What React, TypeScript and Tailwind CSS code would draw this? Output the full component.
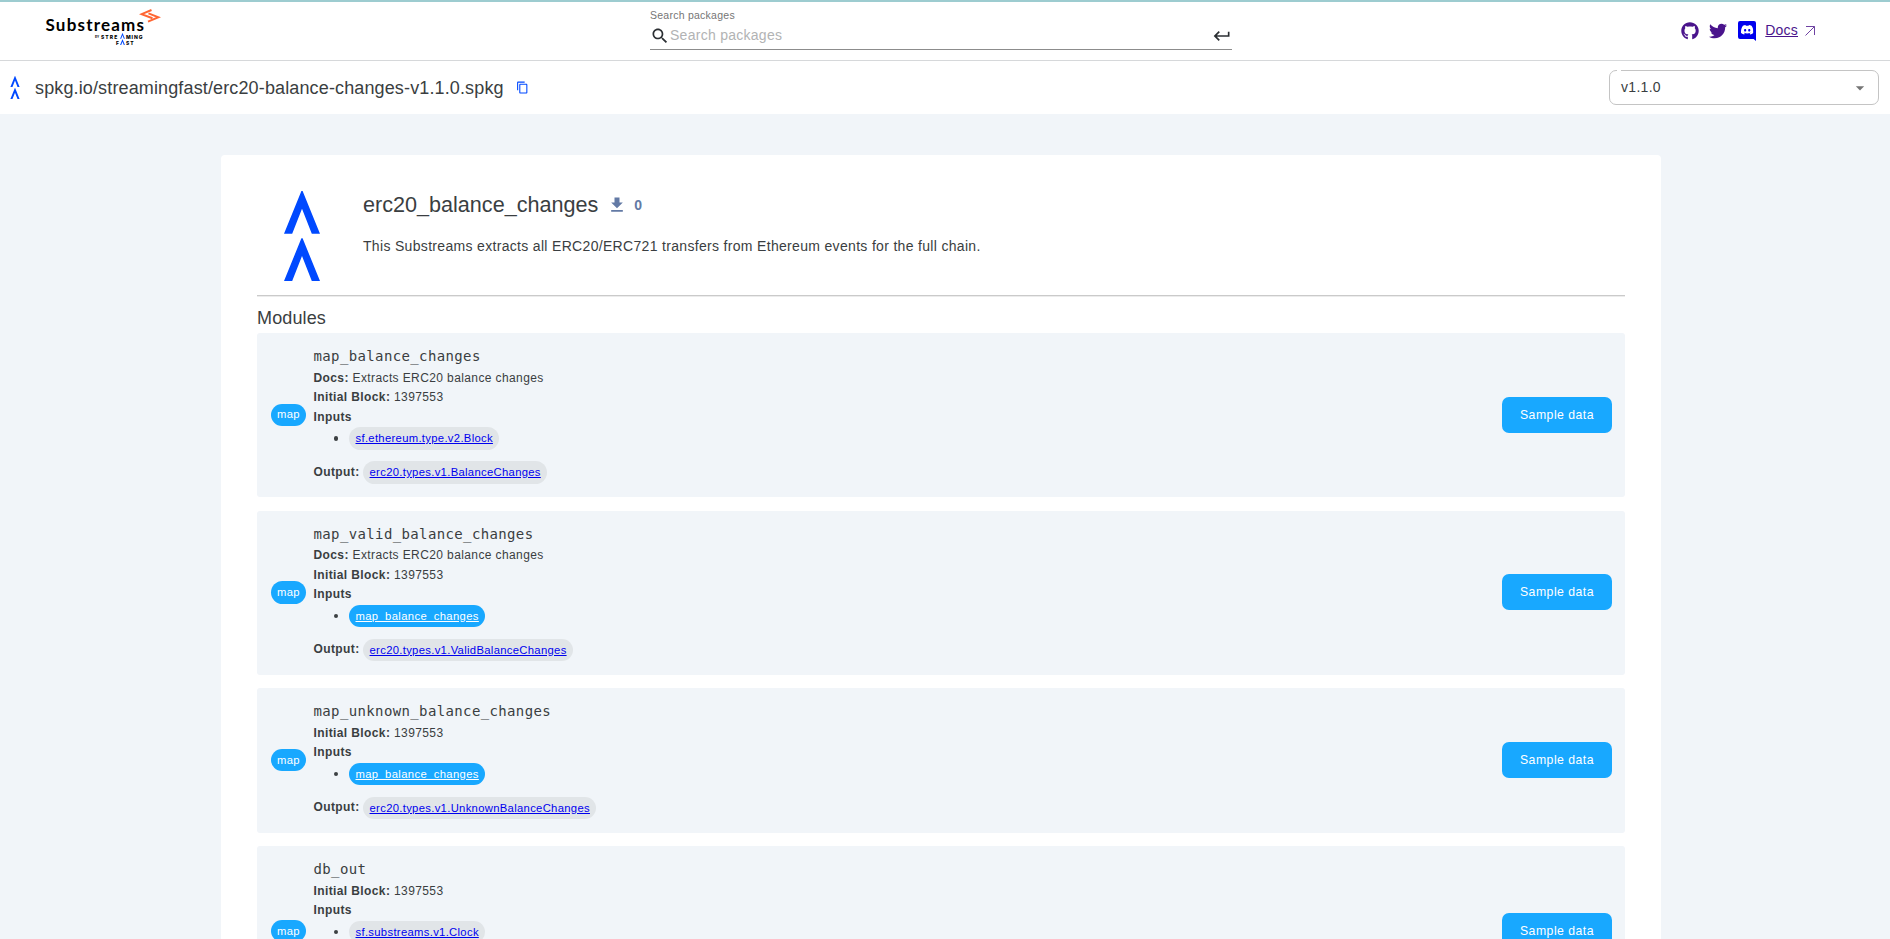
import React from "react";
import { SiDiscord } from "react-icons/si";
import { FaGithub, FaTwitter } from "react-icons/fa";

type Ref = { name: string; kind: "type" | "module" };
type Module = { name: string; docs?: string; block: number; inputs: Ref[]; output: string };

const modules: Module[] = [
  { name: "map_balance_changes", docs: "Extracts ERC20 balance changes", block: 1397553, inputs: [{ name: "sf.ethereum.type.v2.Block", kind: "type" }], output: "erc20.types.v1.BalanceChanges" },
  { name: "map_valid_balance_changes", docs: "Extracts ERC20 balance changes", block: 1397553, inputs: [{ name: "map_balance_changes", kind: "module" }], output: "erc20.types.v1.ValidBalanceChanges" },
  { name: "map_unknown_balance_changes", block: 1397553, inputs: [{ name: "map_balance_changes", kind: "module" }], output: "erc20.types.v1.UnknownBalanceChanges" },
  { name: "db_out", block: 1397553, inputs: [{ name: "sf.substreams.v1.Clock", kind: "type" }, { name: "map_valid_balance_changes", kind: "module" }], output: "sf.substreams.sink.database.v1.DatabaseChanges" },
];

function Chevrons({ className }: { className: string }) {
  return (
    <svg viewBox="0 0 36 90" className={className} fill="#0049ff">
      <path d="M17.4 0h1.2L36 42.7h-8.2L18 17.8 8.2 42.7H0z" />
      <path d="M17.4 47.3h1.2L36 90h-8.2L18 65.1 8.2 90H0z" />
    </svg>
  );
}

function BrandLogo() {
  return (
    <div className="relative ml-[45px] mt-[7px] h-[40px] w-[118px] shrink-0 text-black">
      <span className="absolute left-[0.5px] top-[4.5px] font-['Lato'] text-[17px] font-bold leading-[22px] tracking-[1.2px]">Substreams</span>
      <svg viewBox="0 0 22 14" className="absolute left-[94px] top-0 h-[14px] w-[22px]" fill="none" stroke="#ff6633" strokeWidth="2">
        <path d="M12.5 1 2.500 5.200 13.500 9.300" />
        <path d="M9.500 4.400 19.500 8.300 9 12.600" />
      </svg>
      <span className="absolute left-[50px] top-[26px] font-['Inter'] text-[3px] font-bold leading-[5px]">BY</span>
      <span className="absolute left-[56px] top-[24px] font-['Inter'] text-[5px] font-extrabold leading-[8px] tracking-[1.05px]">STRE</span>
      <span className="absolute left-[81px] top-[24px] font-['Inter'] text-[5px] font-extrabold leading-[8px] tracking-[0.9px]">MING</span>
      <span className="absolute left-[71px] top-[30px] font-['Inter'] text-[5px] font-extrabold leading-[8px]">F</span>
      <span className="absolute left-[81px] top-[30px] font-['Inter'] text-[5px] font-extrabold leading-[8px] tracking-[1px]">ST</span>
      <Chevrons className="absolute left-[75px] top-[24px] h-[12px] w-[5px]" />
    </div>
  );
}

function Header() {
  return (
    <header className="flex h-[61px] border-b border-t-2 border-b-[#d6d8da] border-t-[#9dccd0] bg-white">
      <BrandLogo />
      <div className="ml-[487px] mt-[7px] flex h-[41px] w-[582px] flex-col border-b border-[#8c8c8c]">
        <label className="text-[10.5px] leading-[12px] tracking-[0.25px] text-[#757575]">Search packages</label>
        <div className="mt-[3px] flex h-[24px] items-center">
          <svg viewBox="0 0 24 24" className="h-[20px] w-[20px]" fill="#2b2f33">
            <path d="M15.5 14h-.79l-.28-.27C15.41 12.59 16 11.11 16 9.5 16 5.91 13.09 3 9.5 3S3 5.91 3 9.5 5.91 16 9.5 16c1.61 0 3.09-.59 4.23-1.57l.27.28v.79l5 4.99L20.49 19l-4.99-5zm-6 0C7.01 14 5 11.99 5 9.5S7.01 5 9.5 5 14 7.01 14 9.5 11.99 14 9.5 14z" />
          </svg>
          <span className="mb-[2px] text-[14px] tracking-[0.27px] text-[#b2b3b4]">Search packages</span>
          <svg viewBox="0 0 24 24" className="ml-auto h-[20px] w-[20px]" fill="#2b2f33">
            <path d="M19 7v4H5.83l3.58-3.59L8 6l-6 6 6 6 1.41-1.41L5.83 13H21V7z" />
          </svg>
        </div>
      </div>
      <nav className="ml-auto mr-[75px] flex h-[57px] items-center text-[#4a148c]">
        <FaGithub className="h-[18px] w-[18px]" />
        <FaTwitter className="ml-[10px] h-[18px] w-[18px]" />
        <svg viewBox="0 0 18 20" className="ml-[11px] h-[20px] w-[18px]">
          <path fill="#0000ee" d="M2 0h14q2 0 2 2v18l-2.4-2H2q-2 0-2-2V2q0-2 2-2z" />
          <SiDiscord x="3" y="2.6" size="12.4" color="#fff" />
        </svg>
        <a className="ml-[9px] text-[14px] tracking-[0.2px] underline">Docs</a>
        <svg viewBox="0 0 10 10" className="ml-[7px] h-[10px] w-[10px] opacity-80" fill="none" stroke="currentColor">
          <path d="M.5 9.5l9-9M1 .5h8.500V9" />
        </svg>
      </nav>
    </header>
  );
}

function PackageBar() {
  return (
    <div className="flex h-[53px] items-center bg-white pl-[10px] pr-[11px]">
      <Chevrons className="h-[23px] w-[10px]" />
      <span className="ml-[15px] mt-[2px] text-[18px] tracking-[0.135px]">spkg.io/streamingfast/erc20-balance-changes-v1.1.0.spkg</span>
      <svg viewBox="0 0 24 24" className="ml-[12px] h-[13px] w-[13px]" fill="#0049ff">
        <path d="M16 1H4c-1.100 0-2 .9-2 2v14h2V3h12V1zm3 4H8c-1.100 0-2 .9-2 2v14c0 1.100.9 2 2 2h11c1.100 0 2-.9 2-2V7c0-1.100-.9-2-2-2zm0 16H8V7h11v14z" />
      </svg>
      <div className="relative ml-auto flex h-[35px] w-[270px] items-center justify-between rounded-[7px] border border-[#c4c4c4] pl-[11px] pr-[8px]">
        <span className="absolute -top-px left-[7px] h-px w-[4px] bg-white" />
        <span className="text-[14px] tracking-[0.3px]">v1.1.0</span>
        <svg viewBox="0 0 24 24" className="mt-px h-[20px] w-[20px]" fill="#757575">
          <path d="M7 10l5 5 5-5z" />
        </svg>
      </div>
    </div>
  );
}

function Chip({ item }: { item: Ref }) {
  const tone = item.kind === "module" ? "bg-[#18a8ff] text-white tracking-[0.37px]" : "bg-[#e1e5e8] text-[#0000ee] tracking-[0.32px]";
  return (
    <a className={`inline-flex h-[22.5px] items-center rounded-full px-[6.5px] text-[11.25px] leading-[21px] underline ${tone}`}>{item.name}</a>
  );
}

function ModuleCard({ module }: { module: Module }) {
  return (
    <article className="flex items-center rounded-[3px] bg-[#f1f5f9] pb-[13.25px] pl-[14px] pr-[13px] pt-[12.25px]">
      <span className="mt-[0.5px] flex h-[22.5px] w-[35px] items-center justify-center rounded-full bg-[#18a8ff] text-[11.25px] tracking-[0.34px] text-white">map</span>
      <div className="ml-[7.500px] text-[12px] leading-[19.5px] tracking-[0.39px]">
        <h3 className="mb-[1.5px] font-['DejaVu_Sans_Mono'] text-[14px] leading-[22px] tracking-[0.37px]">{module.name}</h3>
        {module.docs && (
          <p>
            <b>Docs:</b> {module.docs}
          </p>
        )}
        <p>
          <b>Initial Block:</b> {module.block}
        </p>
        <p>
          <b>Inputs</b>
        </p>
        <ul className="flex flex-col gap-[3.5px]">
          {module.inputs.map((input) => (
            <li key={input.name} className="flex h-[22.5px] items-center pl-[20px]">
              <span className="mr-[11px] h-[4.500px] w-[4.500px] rounded-full bg-[#3c4043]" />
              <Chip item={input} />
            </li>
          ))}
        </ul>
        <div className="mt-[11.5px] flex h-[22.5px] items-center">
          <b className="mr-[3.500px]">Output:</b>
          <Chip item={{ name: module.output, kind: "type" }} />
        </div>
      </div>
      <button className="ml-auto mt-[0.5px] h-[36px] w-[110px] rounded-[7px] bg-[#18a8ff] text-[12.25px] tracking-[0.48px] text-white">Sample data</button>
    </article>
  );
}

export default function App() {
  return (
    <div className="h-[939px] overflow-hidden bg-[#f1f5f9] font-['Liberation_Sans',sans-serif] text-[#3a3e41]">
      <Header />
      <PackageBar />
      <main className="ml-[221px] mt-[41px] w-[1440px] rounded-[4px] bg-white px-[36px] pt-[36px]">
        <section className="flex h-[104px]">
          <Chevrons className="ml-[27px] h-[90px] w-[36px]" />
          <div className="ml-[43px]">
            <div className="flex h-[28px] items-center">
              <h1 className="text-[21.6px]">erc20_balance_changes</h1>
              <svg viewBox="0 0 24 24" className="ml-[9px] h-[20px] w-[20px]" fill="#637aa5">
                <path d="M5 20h14v-2H5v2zM19 9h-4V3H9v6H5l7 7 7-7z" />
              </svg>
              <b className="ml-[7px] text-[14px] text-[#637aa5]">0</b>
            </div>
            <p className="mt-[17px] text-[14px] leading-[20px] tracking-[0.32px]">This Substreams extracts all ERC20/ERC721 transfers from Ethereum events for the full chain.</p>
          </div>
        </section>
        <hr className="h-[2px] border-b border-t border-b-[#ececec] border-t-[#cacaca]" />
        <h2 className="mt-[8px] h-[28px] text-[18px] leading-[26px] tracking-[0.135px]">Modules</h2>
        <div className="flex flex-col gap-[13.5px]">
          {modules.map((module) => (
            <ModuleCard key={module.name} module={module} />
          ))}
        </div>
      </main>
    </div>
  );
}
